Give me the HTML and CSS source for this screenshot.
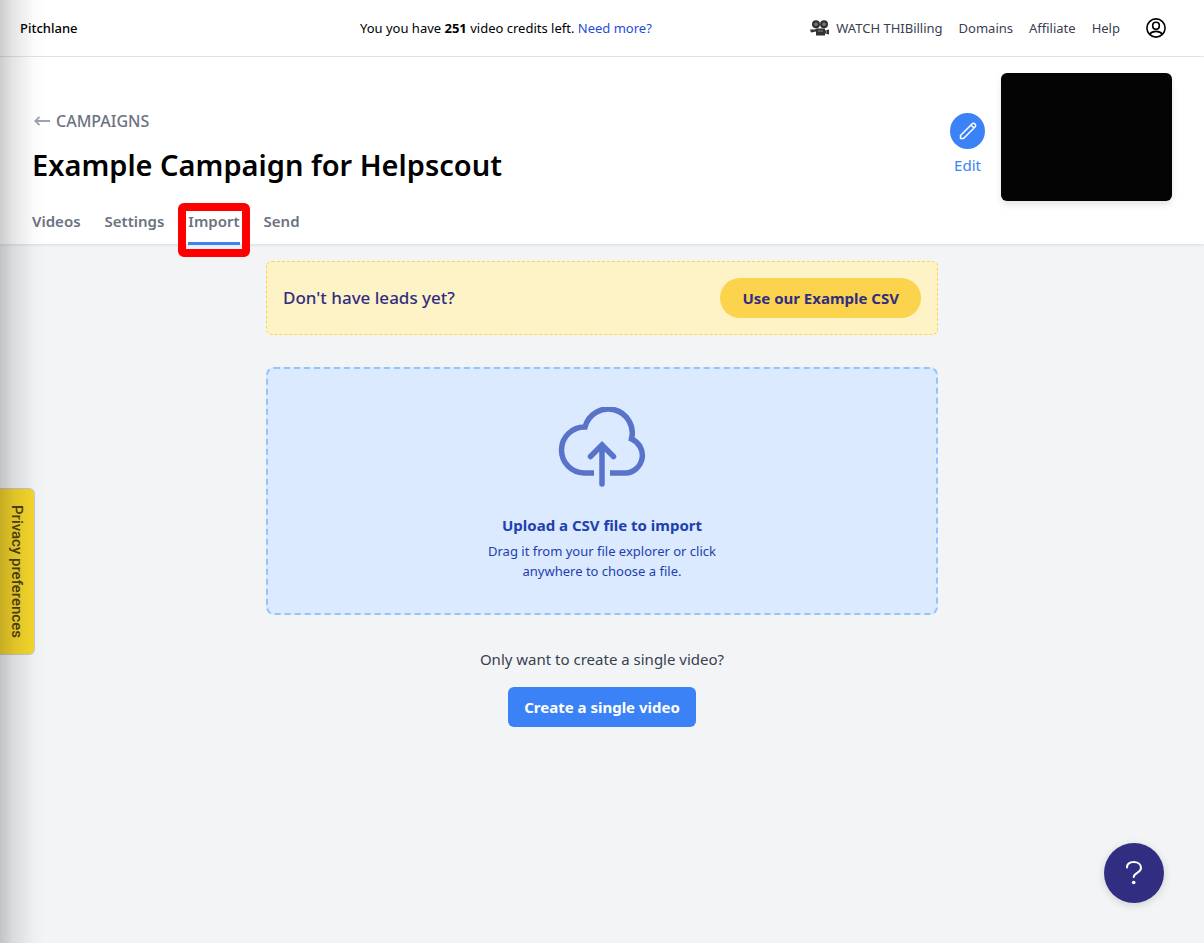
FILE: index.html
```html
<!DOCTYPE html>
<html lang="en">
<head>
    <meta charset="UTF-8">
    <meta name="viewport" content="width=device-width, initial-scale=1.0">
    <title>Pitchlane</title>
    <link rel="stylesheet" href="styles.css">
</head>
<body>
    <header class="topbar">
        <a href="#" class="brand">Pitchlane</a>
        <p class="credits">You you have <strong>251</strong> video credits left. <a href="#">Need more?</a></p>
        <nav class="topnav">
            <a href="#" class="watch">
                <svg width="20" height="16" viewBox="0 0 20 16" aria-hidden="true">
                    <circle cx="6" cy="4.200" r="4" fill="#333"/>
                    <circle cx="14" cy="4.200" r="4" fill="#333"/>
                    <circle cx="6" cy="4.200" r="1.800" fill="#777"/>
                    <circle cx="14" cy="4.200" r="1.800" fill="#777"/>
                    <path d="M0 9.500h5l1-1h9v2l4-1v5l-4-1v2H6v-4l-5 1z" fill="#333"/>
                    <path d="M8 11h5M16.500 10.500v3" stroke="#888"/>
                </svg>
                <span>WATCH THI</span>
            </a>
            <a href="#">Billing</a>
            <a href="#">Domains</a>
            <a href="#">Affiliate</a>
            <a href="#">Help</a>
            <a href="#" class="account" aria-label="Account">
                <svg width="20" height="20" viewBox="0 0 20 20" fill="none" stroke="#000" stroke-width="1.6" aria-hidden="true">
                    <circle cx="10" cy="10" r="9.1"/>
                    <rect x="6.7" y="4.2" width="6.6" height="7" rx="3.1"/>
                    <path d="M3.6 16.2c1.6-2 3.8-2.8 6.4-2.8s4.800.8 6.4 2.8"/>
                </svg>
            </a>
        </nav>
    </header>

    <section class="hero">
        <div class="hero-top">
            <div class="hero-title">
                <a href="#" class="back">
                    <svg width="16" height="10" viewBox="0 0 16 10" fill="none" stroke="#9ca3af" stroke-width="1.8" aria-hidden="true">
                        <path d="M16 5H1.500M5.500.8L1.200 5l4.300 4.200"/>
                    </svg>
                    <span>CAMPAIGNS</span>
                </a>
                <h1>Example Campaign for Helpscout</h1>
            </div>
            <div class="hero-side">
                <a href="#" class="edit">
                    <span class="edit-icon">
                        <svg width="18" height="18" viewBox="0 0 18 18" fill="none" stroke="#fff" stroke-width="1.5" stroke-linejoin="round" aria-hidden="true">
                            <path d="M1.500 16.500v-3L13 2a2 2 0 0 1 3 3L4.500 16.500zM12 3l3 3"/>
                        </svg>
                    </span>
                    <span>Edit</span>
                </a>
                <div class="thumb"></div>
            </div>
        </div>
        <nav class="tabs">
            <a href="#">Videos</a>
            <a href="#">Settings</a>
            <a href="#" class="active">Import</a>
            <a href="#">Send</a>
        </nav>
    </section>

    <main class="content">
        <div class="notice">
            <span>Don't have leads yet?</span>
            <button type="button" class="btn-example">Use our Example CSV</button>
        </div>

        <label class="dropzone">
            <input type="file" accept=".csv">
            <svg width="88" height="80" viewBox="0 0 88 80" fill="none" stroke="#5873c9" stroke-width="5.5" aria-hidden="true">
                <path d="M36 66H26A23 23 0 0 1 27 20A24 24 0 0 1 73.500 32A17.700 17.700 0 0 1 67.500 66H52"/>
                <path d="M44 77V38M32.500 49.500L44 38l11.500 11.500" stroke-linecap="round"/>
            </svg>
            <span class="dropzone-title">Upload a CSV file to import</span>
            <span class="dropzone-text">Drag it from your file explorer or click anywhere to choose a file.</span>
        </label>

        <p class="single">Only want to create a single video?</p>
        <button type="button" class="btn-single">Create a single video</button>
    </main>

    <div class="edge-shadow"></div>
    <button type="button" class="privacy">Privacy preferences</button>

    <button type="button" class="help" aria-label="Help">
        <svg width="18" height="26" viewBox="0 0 18 26" fill="none" stroke="#fff" stroke-width="2" stroke-linecap="round" aria-hidden="true">
            <path d="M2 7.500C2 4 4.800 2 8.700 2S16 4.200 16 8c0 5-7.300 4.500-7.300 9"/>
            <circle cx="8.700" cy="22.500" r="1.800" fill="#fff" stroke="none"/>
        </svg>
    </button>
</body>
</html>
```

FILE: styles.css
```css
* {
    margin: 0;
    padding: 0;
    box-sizing: border-box;
}

body {
    background-color: #f3f4f6;
    color: #000;
    font-family: 'Noto Sans', 'Open Sans', sans-serif;
    font-size: 15px;
    line-height: 24px;
    min-height: 100vh;
}

a {
    color: inherit;
    text-decoration: none;
}

button {
    border: none;
    font-family: inherit;
    cursor: pointer;
}

svg {
    display: block;
}

/* Top bar */
.topbar {
    display: flex;
    align-items: center;
    justify-content: space-between;
    height: 57px;
    padding: 0 38px 0 20px;
    background-color: #fff;
    border-bottom: 1px solid #e5e7eb;
    font-size: 13px;
}

.brand {
    font-weight: 500;
}

.credits a {
    color: #1d4ed8;
}

.topnav {
    display: flex;
    align-items: center;
    gap: 16px;
    color: #374151;
    white-space: nowrap;
}

/* Hangs out of the menu on the left so the credits stay centred */
.watch {
    display: flex;
    align-items: center;
    gap: 6px;
    margin-left: -124px;
    margin-right: -16px;
}

.account {
    margin-left: 10px;
}

/* Campaign header */
.hero {
    position: relative;
    background-color: #fff;
    box-shadow: 0 1px 3px rgba(0,0,0,0.1);
}

.hero-top {
    display: flex;
    justify-content: space-between;
    padding: 16px 32px 0;
}

.hero-title {
    align-self: flex-end;
    padding-bottom: 16px;
}

.back {
    display: flex;
    align-items: center;
    gap: 6px;
    margin-bottom: 12px;
    padding-left: 2px;
    color: #6b7280;
    font-size: 16px;
    font-weight: 500;
}

.hero-title h1 {
    font-size: 29px;
    font-weight: 600;
    line-height: 40px;
}

.hero-side {
    display: flex;
    align-items: center;
    gap: 16px;
}

.edit {
    display: flex;
    flex-direction: column;
    align-items: center;
    gap: 4px;
    padding-top: 16px;
    color: #3b82f6;
}

.edit-icon {
    display: flex;
    align-items: center;
    justify-content: center;
    width: 35px;
    height: 36px;
    border-radius: 50%;
    background-color: #3b82f6;
}

.thumb {
    width: 171px;
    height: 128px;
    border-radius: 6px;
    background-color: #040404;
    box-shadow: 0 4px 6px rgba(0,0,0,0.1);
}

.tabs {
    display: flex;
    gap: 24px;
    padding: 0 32px;
    color: #6b7280;
    font-weight: 600;
}

.tabs a {
    position: relative;
    padding: 8px 0 9px;
    margin-bottom: -1px;
    border-bottom: 3px solid transparent;
}

.tabs .active {
    border-bottom-color: #3b82f6;
}

/* Red frame around the current tab */
.tabs .active::after {
    content: '';
    position: absolute;
    top: 2px;
    bottom: -15px;
    left: -10px;
    right: -10px;
    border: 8px solid #fe0000;
    border-radius: 6px;
}

/* Import */
.content {
    display: flex;
    flex-direction: column;
    align-items: center;
    max-width: 672px;
    margin: 0 auto;
    padding: 17px 0 32px;
}

.notice {
    display: flex;
    align-items: center;
    justify-content: space-between;
    width: 100%;
    padding: 16px;
    border: 1px dashed #fcd34d;
    border-radius: 6px;
    background-color: #fef3c7;
    color: #312e81;
    font-size: 17px;
    font-weight: 500;
}

.btn-example {
    padding: 8px 22px;
    border-radius: 20px;
    background-color: #fcd34d;
    color: #312e81;
    font-size: 15px;
    font-weight: 700;
    line-height: 24px;
}

.dropzone {
    position: relative;
    display: flex;
    flex-direction: column;
    align-items: center;
    width: 100%;
    margin-top: 32px;
    padding: 38px 16px 32px;
    border: 2px dashed #93c5fd;
    border-radius: 8px;
    background-color: #dbeafe;
    color: #1e40af;
    text-align: center;
    cursor: pointer;
}

.dropzone input {
    position: absolute;
    inset: 0;
    opacity: 0;
    cursor: pointer;
}

.dropzone-title {
    margin-top: 26px;
    font-weight: 700;
}

.dropzone-text {
    max-width: 256px;
    margin-top: 4px;
    font-size: 13px;
    line-height: 20px;
}

.single {
    margin-top: 32px;
    color: #374151;
}

.btn-single {
    margin-top: 16px;
    padding: 8px 16px;
    border-radius: 6px;
    background-color: #3b82f6;
    color: #fff;
    font-size: 15px;
    font-weight: 700;
    line-height: 24px;
}

/* Floating items */
.privacy {
    position: fixed;
    top: 488px;
    left: 0;
    padding: 16px 8px;
    border: 1px solid #c5c8cc;
    border-left: none;
    border-radius: 0 6px 6px 0;
    background-color: #f7d72b;
    color: #4d430d;
    font-family: Roboto, sans-serif;
    font-size: 15px;
    font-weight: 500;
    line-height: 18px;
    writing-mode: vertical-rl;
}

.edge-shadow {
    position: fixed;
    top: 0;
    bottom: 0;
    left: 0;
    z-index: 1;
    width: 44px;
    background: linear-gradient(to right, rgba(0,0,0,0.2), rgba(0,0,0,0.1) 30%, rgba(0,0,0,0.02) 75%, transparent);
    pointer-events: none;
}

.help {
    position: fixed;
    right: 40px;
    bottom: 40px;
    display: flex;
    align-items: center;
    justify-content: center;
    width: 60px;
    height: 60px;
    border-radius: 50%;
    background-color: #312e81;
    box-shadow: 0 2px 8px rgba(0,0,0,0.15);
}
```
